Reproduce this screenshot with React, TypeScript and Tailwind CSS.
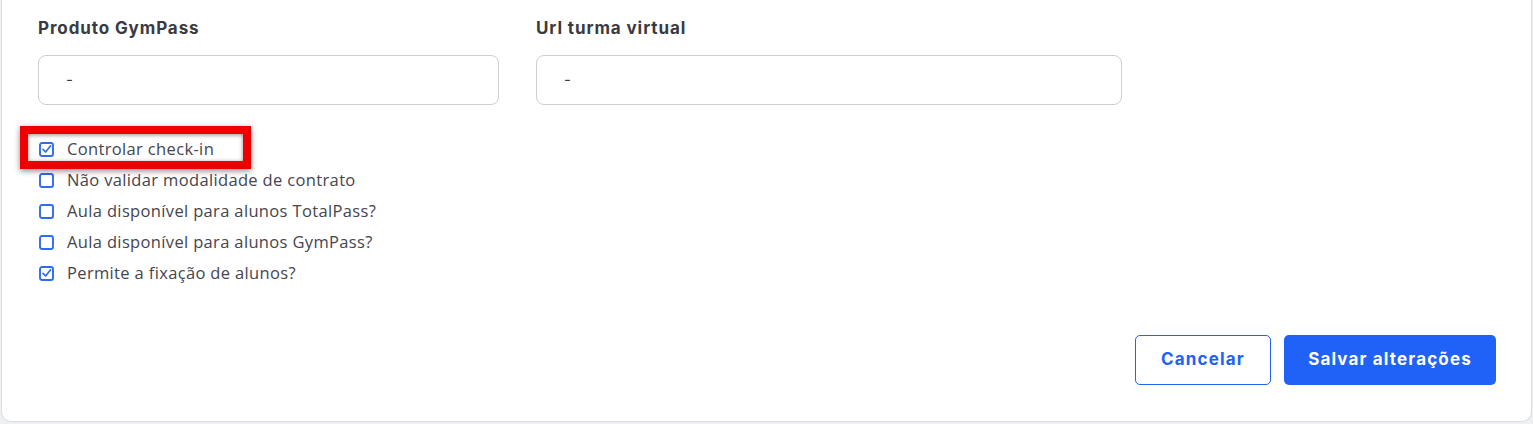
import React from "react"

const options = [
  { label: "Controlar check-in", checked: true },
  { label: "Não validar modalidade de contrato", checked: false },
  { label: "Aula disponível para alunos TotalPass?", checked: false },
  { label: "Aula disponível para alunos GymPass?", checked: false },
  { label: "Permite a fixação de alunos?", checked: true },
]

function CheckBox({ checked }: { checked: boolean }) {
  return (
    <svg width="15" height="15" viewBox="0 0 15 15" fill="none" className="shrink-0">
      <rect x="1" y="1" width="13" height="13" rx="2" stroke="#2f6cf2" strokeWidth="1.9" />
      {checked && (
        <path d="M4 7.4 L6.6 10 L11.6 3.8" stroke="#2f6cf2" strokeWidth="1.7" strokeLinecap="round" strokeLinejoin="round" />
      )}
    </svg>
  )
}

function Field({ label, width }: { label: string; width: string }) {
  return (
    <div className={`flex flex-col ${width}`}>
      <label className="text-[17px] leading-6 font-bold text-[#3a3a42] tracking-[0.9px] font-['Inter',sans-serif]">
        {label}
      </label>
      <div className="mt-[15px] h-[50px] rounded-[8px] border border-[#cfcfd2] flex items-center px-[27px] text-[15px] text-[#3a3a42] font-['Inter',sans-serif]">
        -
      </div>
    </div>
  )
}

export default function App() {
  return (
    <div className="min-h-screen bg-[#eef0f2]">
      <div className="relative ml-px w-[1531px] h-[422px] bg-white border border-t-0 border-[#dcdde2] rounded-b-[10px] pl-[36px] pr-[35px] pt-[16px]">
        <div className="flex gap-[37px]">
          <Field label="Produto GymPass" width="w-[461px]" />
          <Field label="Url turma virtual" width="w-[586px]" />
        </div>

        <div className="mt-[29px] flex flex-col">
          {options.map((o) => (
            <div key={o.label} className="h-[31px] flex items-center gap-[13px] pl-[1px]">
              <CheckBox checked={o.checked} />
              <span className="text-[16.5px] text-[#45454f] tracking-[0.35px] font-['Open_Sans',sans-serif]">{o.label}</span>
            </div>
          ))}
        </div>

        <div className="mt-[46px] flex justify-end gap-[13px]">
          <button className="w-[136px] h-[50px] rounded-[5px] border border-[#2062f7] bg-white text-[#2062f7] text-[17px] font-bold tracking-[1.15px] font-['Inter',sans-serif]">
            Cancelar
          </button>
          <button className="w-[212px] h-[50px] rounded-[5px] bg-[#2062f7] text-white text-[17px] font-bold tracking-[1.15px] font-['Inter',sans-serif]">
            Salvar alterações
          </button>
        </div>

        <div className="absolute left-[18px] top-[126px] w-[231px] h-[43px] border-[8px] border-[#ee0000] shadow-[0_2px_6px_rgba(0,0,0,0.45),inset_0_1px_4px_rgba(0,0,0,0.45)]" />
      </div>
    </div>
  )
}
